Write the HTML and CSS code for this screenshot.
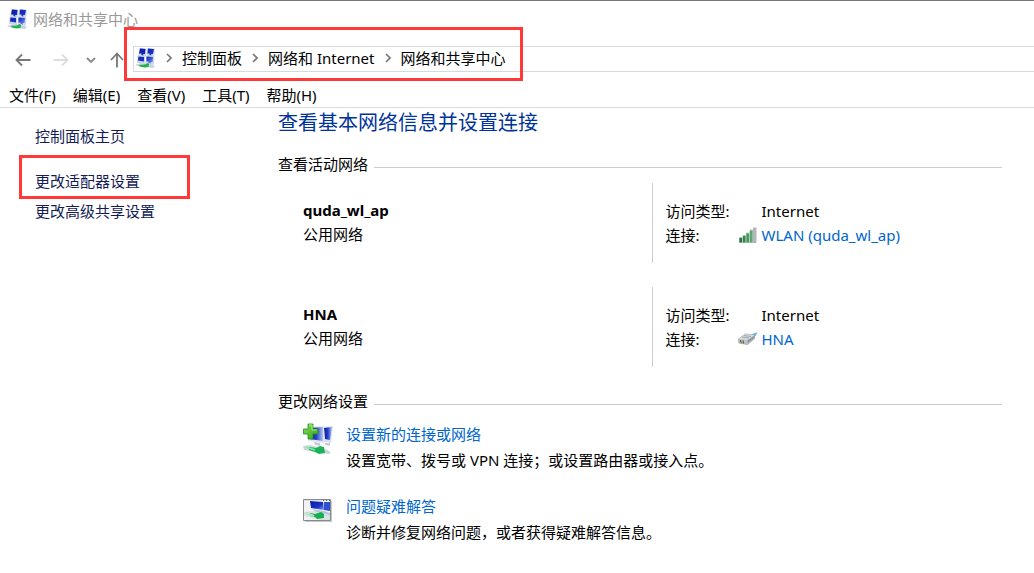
FILE: index.html
```html
<!DOCTYPE html>
<html lang="zh-CN">
<head>
<meta charset="utf-8">
<meta name="viewport" content="width=device-width, initial-scale=1">
<title>网络和共享中心</title>
<link rel="stylesheet" href="styles.css">
</head>
<body>
<svg class="defs" aria-hidden="true">
  <defs>
    <linearGradient id="screen" x1="0" y1="0" x2="1" y2="1">
      <stop offset="0" stop-color="#0a1a9c"/>
      <stop offset="0.6" stop-color="#1a32c4"/>
      <stop offset="1" stop-color="#7f9bf0"/>
    </linearGradient>
    <linearGradient id="screen-h" x1="0" y1="0" x2="1" y2="0">
      <stop offset="0" stop-color="#0b1ca0"/>
      <stop offset="0.5" stop-color="#2440c8"/>
      <stop offset="1" stop-color="#b4c6f8"/>
    </linearGradient>
    <linearGradient id="plus" x1="0" y1="0" x2="1" y2="1">
      <stop offset="0" stop-color="#8ae05a"/>
      <stop offset="1" stop-color="#2c9e1c"/>
    </linearGradient>
    <linearGradient id="bar" x1="0" y1="0" x2="1" y2="0">
      <stop offset="0" stop-color="#1d6a3a"/>
      <stop offset="1" stop-color="#5fae78"/>
    </linearGradient>
    <symbol id="network" viewBox="0 0 20 20">
      <path d="M3.500 0l7 .5-.5 8-8-.5zM11 .5l8 .5-1 8-7.500-.5zM1.500 8l7.500.5v7.500l-8-1zM10 8.500l8.500.5-1 8-8-1z" fill="#ccd6ec"/>
      <path d="M4 .5l5.500.5-.5 5-2 0 .5 1.500-2-.5 0-1.500-2.500 0zM12 .5l6 .5-1 5-2 0 .5 1.500-2-.5 0-1.500-2 0zM2.500 8.500l5.500.5v4.500l-6-1zM10.500 8.500l6.500.5-.5 5-2 0 .5 1.500-2.500-.5 0-1.500-2 0z" fill="url(#screen)"/>
      <path d="M0 16.500l5-1.500 8 1 6 2-2 2-8-1-9-1.500z" fill="#c9d3dc"/>
      <path d="M3 17l6-.5 2.500-1.500 1.500 1-.5 3-4 .5-5-1z" fill="#20b34e"/>
    </symbol>
    <symbol id="crumb" viewBox="0 0 6 10">
      <path d="M1 1l4 4-4 4" fill="none" stroke="#777" stroke-width="1.600"/>
    </symbol>
  </defs>
</svg>

<header class="chrome">
  <div class="titlebar">
    <svg class="icon-20" aria-hidden="true"><use href="#network"/></svg>
    <span>网络和共享中心</span>
  </div>
  <div class="navbar">
    <div class="nav-buttons">
      <button class="nav-button" type="button" aria-label="后退"><svg width="16" height="14" viewBox="0 0 16 14"><path d="M15.500 7H1.500M7 1.500L1.500 7 7 12.500" fill="none" stroke="#777" stroke-width="1.800"/></svg></button>
      <button class="nav-button" type="button" aria-label="前进" disabled><svg width="16" height="14" viewBox="0 0 16 14"><path d="M.5 7h14M9 1.500L14.500 7 9 12.500" fill="none" stroke="#ddd" stroke-width="1.800"/></svg></button>
      <button class="nav-button nav-recent" type="button" aria-label="最近位置"><svg width="10" height="6" viewBox="0 0 10 6"><path d="M1 1l4 4 4-4" fill="none" stroke="#888" stroke-width="1.800"/></svg></button>
      <button class="nav-button nav-up" type="button" aria-label="向上"><svg width="14" height="16" viewBox="0 0 14 16"><path d="M7 15.500V2M1 8l6-6.500L13 8" fill="none" stroke="#777" stroke-width="1.800"/></svg></button>
    </div>
    <nav class="address" aria-label="地址">
      <svg class="icon-20" aria-hidden="true"><use href="#network"/></svg>
      <svg class="crumb" aria-hidden="true"><use href="#crumb"/></svg>
      <a href="#panel">控制面板</a>
      <svg class="crumb" aria-hidden="true"><use href="#crumb"/></svg>
      <a href="#internet">网络和 Internet</a>
      <svg class="crumb" aria-hidden="true"><use href="#crumb"/></svg>
      <a href="#center">网络和共享中心</a>
      <span class="mark mark-address"></span>
    </nav>
  </div>
  <div class="menubar">
    <button type="button">文件(F)</button>
    <button type="button">编辑(E)</button>
    <button type="button">查看(V)</button>
    <button type="button">工具(T)</button>
    <button type="button">帮助(H)</button>
  </div>
</header>

<div class="body">
  <nav class="sidebar" aria-label="控制面板">
    <a class="home" href="#home">控制面板主页</a>
    <a class="adapter" href="#adapter">更改适配器设置<span class="mark mark-adapter"></span></a>
    <a href="#sharing">更改高级共享设置</a>
  </nav>

  <main class="content">
    <h1>查看基本网络信息并设置连接</h1>

    <section>
      <h2>查看活动网络</h2>
      <div class="networks">
        <article class="network">
          <div class="identity">
            <h3>quda_wl_ap</h3>
            <p>公用网络</p>
          </div>
          <dl class="details">
            <dt>访问类型:</dt>
            <dd>Internet</dd>
            <dt>连接:</dt>
            <dd class="connection">
              <svg width="20" height="16" viewBox="0 0 20 16" aria-hidden="true">
                <path d="M1 10h3.500v6H1zM4.500 8h3.500v8H4.500zM8 5.500h3.500v10.500H8zM11.500 2.500h3.500v13.500h-3.500z" fill="#b7d2be"/>
                <path d="M1.500 11h2.500v4.500H1.500zM5 9h2.500v6.500H5zM8.500 6.500h2.500v9H8.500zM12 3.500h2.500v12H12z" fill="url(#bar)"/>
                <path d="M15 .5h3.500V16H15z" fill="#b3b5b8"/>
              </svg>
              <a href="#wlan">WLAN (quda_wl_ap)</a>
            </dd>
          </dl>
        </article>
        <article class="network">
          <div class="identity">
            <h3>HNA</h3>
            <p>公用网络</p>
          </div>
          <dl class="details">
            <dt>访问类型:</dt>
            <dd>Internet</dd>
            <dt>连接:</dt>
            <dd class="connection">
              <svg width="20" height="16" viewBox="0 0 20 16" aria-hidden="true">
                <path d="M13 4l3-2 3.500-.5-1.500 3-3 2.500z" fill="#72bfdc"/>
                <path d="M.5 8l7-5 9 1v3.500L9.500 13.500 1 12z" fill="#bcc3cb" stroke="#8a929c" stroke-width=".7"/>
                <path d="M.5 8l7-5 9 1-7.500 5z" fill="#d6dbe1"/>
                <path d="M4 6l7 1M6 4.500l7 1" stroke="#929aa4" stroke-width=".8"/>
                <path d="M2.500 9v2.500M4 9.500v2.500M5.500 9.500v3" stroke="#747033"/>
                <path d="M9.500 9.500l6.500-4.500v2l-6.500 5z" fill="#8b939d"/>
              </svg>
              <a href="#hna">HNA</a>
            </dd>
          </dl>
        </article>
      </div>
    </section>

    <section class="settings">
      <h2>更改网络设置</h2>
      <div class="tasks">
        <article class="task">
          <svg width="32" height="32" viewBox="0 0 32 32" aria-hidden="true">
            <path d="M20 4l10-1-2 17-7-1z" fill="#d9e0ef"/>
            <path d="M21 5l8-1-2 13-5-1z" fill="url(#screen-h)"/>
            <path d="M6 4l15-1 .5 17.500L5 18z" fill="#e2e7f3"/>
            <path d="M7 5l13-1v14L6.500 16z" fill="url(#screen-h)"/>
            <path d="M11 19l6 1v3l-5-1zM22 20l5 0v3l-5-1z" fill="#c8ccd6"/>
            <path d="M0 23l7-1 18 5 3 3-3 1L1 27z" fill="#cbd7d6"/>
            <path d="M6 24l7 1 4-2 4 1 1 6-6 1-4-2-6-2z" fill="#1bb25b"/>
            <path d="M3 24l9 3" stroke="#8ce5aa" stroke-width="1.500"/>
            <path d="M5 1h5v5h5v5h-5v5H5v-5H0.500V6H5z" fill="url(#plus)" stroke="#248a20" stroke-width=".8"/>
            <path d="M6 2h3v5h5" fill="none" stroke="#abed83"/>
          </svg>
          <div>
            <a href="#new">设置新的连接或网络</a>
            <p>设置宽带、拨号或 VPN 连接；或设置路由器或接入点。</p>
          </div>
        </article>
        <article class="task">
          <svg width="32" height="32" viewBox="0 0 32 32" aria-hidden="true">
            <path d="M2 6h27v21H2z" fill="#c8c8c8"/>
            <path d="M.5 4.500h27v21H.5z" fill="#f2f3f5" stroke="#858a90"/>
            <path d="M1 5h26v1H1z" fill="#dce0e6"/>
            <path d="M20 5.500h1M23 5.500h1M26 5.500h1" stroke="#555"/>
            <path d="M7 6l13 1 1 8-13-2z" fill="url(#screen)"/>
            <path d="M21 7h6v9l-6-1z" fill="#3150cd"/>
            <path d="M9 14l12 2 6 2v3l-5-1-9-3z" fill="#b7c4df"/>
            <path d="M1 17l9-1 17 4v5H17L1 21z" fill="#dbe2e2"/>
            <path d="M7 18l5 1 6-2 3 2v4l-7 1-2-2-5-1z" fill="#18ae54"/>
            <path d="M3 18l8 3" stroke="#a8e8bc" stroke-width="2"/>
          </svg>
          <div>
            <a href="#troubleshoot">问题疑难解答</a>
            <p>诊断并修复网络问题，或者获得疑难解答信息。</p>
          </div>
        </article>
      </div>
    </section>
  </main>
</div>
</body>
</html>
```
FILE: styles.css
```css
* {
  box-sizing: border-box;
}

body {
  margin: 0;
  background: #fff;
  color: #000;
  font: 15px/20px "Noto Sans", "Noto Sans CJK SC", sans-serif;
}

h1, h2, h3, p, dl, dd {
  margin: 0;
}

a {
  color: #0066cc;
  text-decoration: none;
}

a:hover {
  text-decoration: underline;
}

button {
  padding: 0;
  border: 0;
  background: none;
  color: inherit;
  font: inherit;
}

svg {
  display: block;
  flex: none;
}

.defs {
  position: absolute;
  width: 0;
  height: 0;
}

.icon-20 {
  width: 20px;
  height: 20px;
}

.chrome {
  border-top: 1px solid #777780;
  border-bottom: 1px solid #d9d9d9;
}

.titlebar {
  display: flex;
  align-items: center;
  gap: 5px;
  padding: 8px;
  color: #999;
}

.navbar {
  display: flex;
  align-items: center;
  margin-top: 9px;
}

.nav-buttons {
  display: flex;
  align-items: center;
  width: 133px;
  padding: 2px 0 0 15px;
}

.nav-button {
  margin-right: 22px;
}

.nav-recent {
  margin-right: 14px;
  margin-left: -5px;
}

.nav-up {
  margin-right: 0;
}

.address {
  position: relative;
  flex: 1;
  display: flex;
  align-items: center;
  padding: 1px 2px 3px;
  border: 1px solid #d9d9d9;
  border-right: 0;
}

.address a {
  color: #000;
}

.crumb {
  width: 6px;
  height: 10px;
  margin: 0 10px;
}

.mark {
  position: absolute;
  border: 3px solid #ff3838;
  pointer-events: none;
}

.mark-address {
  top: -20px;
  left: -10px;
  width: 399px;
  height: 54px;
}

.mark-adapter {
  top: -16px;
  left: -16px;
  width: 171px;
  height: 44px;
}

.menubar {
  display: flex;
  gap: 17px;
  padding: 13px 9px 2px;
}

.body {
  display: grid;
  grid-template-columns: 278px 1fr;
}

.sidebar {
  display: flex;
  flex-direction: column;
  align-items: flex-start;
  gap: 10px;
  padding: 18px 0 0 35px;
}

.sidebar a {
  color: #151c55;
}

.home {
  margin-bottom: 15px;
}

.adapter {
  position: relative;
}

.content {
  padding: 0 32px 24px 0;
}

h1 {
  color: #003399;
  font-size: 20px;
  font-weight: 400;
  line-height: 30px;
}

h2 {
  display: flex;
  align-items: center;
  gap: 6px;
  margin-top: 16px;
  font-size: 15px;
  font-weight: 400;
  line-height: 20px;
}

h2::after {
  content: "";
  flex: 1;
  margin-top: 6px;
  border-top: 1px solid #ccc;
}

.networks {
  display: grid;
  gap: 24px;
  padding: 9px 0 0 25px;
}

.network {
  display: grid;
  grid-template-columns: 1fr 1fr;
  line-height: 24px;
}

.identity {
  padding: 15px 0 17px;
}

h3 {
  font-size: 15px;
  font-weight: 700;
}

.details {
  display: grid;
  grid-template-columns: 96px 1fr;
  margin-left: -1px;
  padding: 16px 0 16px 13px;
  border-left: 1px solid #ccc;
}

.connection {
  display: flex;
  align-items: center;
  gap: 4px;
  margin-left: -24px;
}

.settings {
  margin-top: 24px;
}

.tasks {
  display: grid;
  gap: 20px;
  padding: 10px 0 0 25px;
  line-height: 26px;
}

.task {
  display: flex;
  gap: 11px;
}

.task svg {
  margin-top: 2px;
}
```
